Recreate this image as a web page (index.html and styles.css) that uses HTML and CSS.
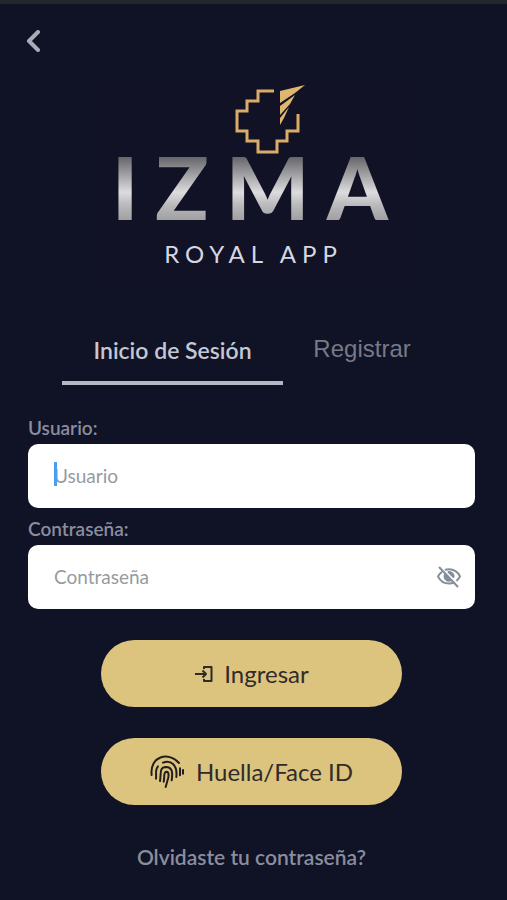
FILE: index.html
```html
<!DOCTYPE html>
<html lang="es">
<head>
    <meta charset="UTF-8">
    <meta name="viewport" content="width=device-width, initial-scale=1.0">
    <title>IZMA Royal App</title>
    <link rel="stylesheet" href="styles.css">
</head>
<body>
    <header>
        <button class="back" type="button" aria-label="Volver">
            <svg width="14" height="22" viewBox="0 0 14 22"><path d="M12 2 3 11l9 9"/></svg>
        </button>
    </header>

    <main>
        <!-- Logo -->
        <div class="logo">
            <svg class="logo-mark" width="70" height="70" viewBox="0 0 70 70">
                <path class="steps" d="M39 7H23V17H12V27H2V47H12V57H23V68H42V57H52V47H63V30"/>
                <path class="feather" d="M45 7 70 1 60 9 45 19ZM45 22 60 11 55 20 45 31ZM45 34 54 23 49 34 45 41Z"/>
            </svg>
            <div class="logo-name">IZMA</div>
            <div class="logo-sub">ROYAL APP</div>
        </div>

        <!-- Tabs -->
        <nav class="tabs">
            <button class="tab active" type="button">Inicio de Sesión</button>
            <button class="tab" type="button">Registrar</button>
        </nav>

        <form>
            <label for="usuario">Usuario:</label>
            <div class="field">
                <input id="usuario" type="text" placeholder="Usuario">
                <span class="caret"></span>
            </div>

            <label for="clave">Contraseña:</label>
            <div class="field">
                <input id="clave" type="password" placeholder="Contraseña">
                <button class="eye" type="button" aria-label="Mostrar contraseña">
                    <svg width="26" height="24" viewBox="0 0 26 24">
                        <path d="M9 5C10.200 4.400 11.600 4.200 13 4.200c5 0 9 3 11 7.200-.8 1.700-2 3.300-3.500 4.500M6 6.800C4.300 7.900 3 9.500 2 11.400c2 4.200 6 7.200 11 7.200 1.900 0 3.600-.4 5.200-1.200"/>
                        <path class="pupil" d="M9 9.500a4.400 4.400 0 0 0 6 5.700ZM12.500 7a4.500 4.500 0 0 1 5 5Z"/>
                        <path d="M3 2l19 20"/>
                    </svg>
                </button>
            </div>

            <!-- Actions -->
            <button class="btn" type="submit">
                <svg class="enter" width="20" height="18" viewBox="0 0 20 18">
                    <path d="M1 9h11M8.500 5.500 12 9l-3.500 3.500M10 4V2h7.500v14H10v-2"/>
                </svg>
                Ingresar
            </button>
            <button class="btn btn-touch" type="button">
                <svg class="finger" width="34" height="34" viewBox="0 0 102 102">
                    <path d="M5 60C-2 5 55-13 87 24"/>
                    <path d="M39 23C62 13 83 30 79 66"/>
                    <path d="M18 71C20 57 14 44 24 34"/>
                    <path d="M30 78C34 55 27 37 48 36 69 36 68 57 65 76"/>
                    <path d="M41 80C45 66 39 52 49 50 59 50 56 68 52 78L47 96"/>
                    <path d="M90 40V61M99 45V56"/>
                </svg>
                Huella/Face ID
            </button>
        </form>

        <a class="forgot" href="#">Olvidaste tu contraseña?</a>
    </main>
</body>
</html>
```

FILE: styles.css
```css
* {
    box-sizing: border-box;
}
body {
    margin: 0;
    min-height: 100vh;
    background-color: #101225;
    border-top: 4px solid #20282a;
    font-family: Lato, sans-serif;
    color: #8b8d9e;
}
button {
    padding: 0;
    border: none;
    background: none;
    font-family: inherit;
    cursor: pointer;
}
svg {
    display: block;
    fill: none;
    stroke-linejoin: round;
}
header {
    height: 76px;
    padding: 26px;
}
.back svg {
    stroke: #a9abb8;
    stroke-width: 4;
    stroke-linecap: round;
}
main {
    display: flex;
    flex-direction: column;
    align-items: center;
    padding: 0 32px 16px 28px;
}
.logo {
    display: flex;
    flex-direction: column;
    align-items: center;
    width: 320px;
    height: 208px;
    padding-top: 4px;
    background-color: #121226;
}
.logo-mark {
    margin-left: 36px;
}
.steps {
    stroke: #d9ac67;
    stroke-width: 3;
    stroke-linejoin: miter;
}
.feather {
    fill: #dfb66f;
}
.logo-name {
    margin-left: 14px;
    font-size: 88px;
    line-height: 66px;
    font-weight: 900;
    letter-spacing: 17px;
    background: linear-gradient(#5c5c60, #dcdcde 58%, #b9b9bb 78%, #a0a0a2);
    -webkit-background-clip: text;
    background-clip: text;
    color: transparent;
}
.logo-sub {
    margin: 18px 0 0 4px;
    font-size: 24px;
    line-height: 32px;
    letter-spacing: 6px;
    color: #d6d7e2;
}
.tabs {
    display: flex;
    width: 100%;
    margin-top: 30px;
    padding: 0 34px;
}
.tab {
    flex: 5;
    height: 67px;
    padding-bottom: 2px;
    border-bottom: 4px solid transparent;
    font-family: "Liberation Sans", sans-serif;
    font-size: 24px;
    color: #777989;
}
.tab.active {
    flex: 7;
    padding-bottom: 0;
    border-color: #b5b7c3;
    font-family: Lato, sans-serif;
    font-size: 23px;
    font-weight: 600;
    color: #c5c7d2;
}
form {
    display: flex;
    flex-direction: column;
    width: 100%;
    margin-top: 31px;
}
label {
    height: 28px;
    font-size: 19px;
    line-height: 24px;
    font-weight: 600;
}
.field {
    position: relative;
    margin-bottom: 9px;
}
.field input {
    display: block;
    width: 100%;
    height: 64px;
    padding: 0 26px 2px;
    border: none;
    border-radius: 10px;
    background-color: #fff;
    font-family: inherit;
    font-size: 19px;
    color: #333;
}
.field input::placeholder {
    color: #969ba2;
}
.caret {
    position: absolute;
    left: 26px;
    top: 18px;
    width: 3px;
    height: 24px;
    background-color: #4a9df0;
}
.eye {
    position: absolute;
    right: 13px;
    top: 20px;
}
.eye svg {
    stroke: #858e98;
    stroke-width: 2;
}
.pupil {
    fill: #858e98;
}
.btn {
    display: flex;
    align-items: center;
    justify-content: center;
    gap: 10px;
    align-self: center;
    width: 301px;
    height: 67px;
    margin-top: 22px;
    border-radius: 34px;
    background-color: #dcc47e;
    font-size: 24px;
    color: #302b2b;
}
.btn-touch {
    gap: 12px;
    margin-top: 31px;
}
.enter {
    stroke: #302b2b;
    stroke-width: 2;
}
.finger {
    stroke: #211e1d;
    stroke-width: 6;
    stroke-linecap: round;
}
.forgot {
    margin-top: 40px;
    font-size: 21px;
    line-height: 24px;
    font-weight: 600;
    color: #8b8d9e;
    text-decoration: none;
}
```
